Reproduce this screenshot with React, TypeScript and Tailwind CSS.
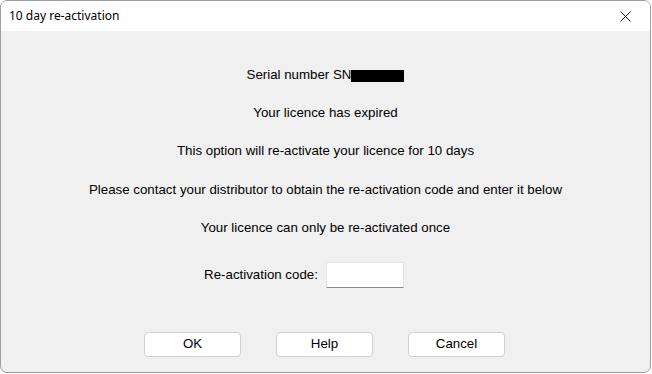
export default function App() {
  const lines = [
    "Your licence has expired",
    "This option will re-activate your licence for 10 days",
    "Please contact your distributor to obtain the re-activation code and enter it below",
    "Your licence can only be re-activated once",
  ];

  return (
    <div className="w-[652px] h-[374px] bg-white">
      <div className="w-[651px] h-[373px] border border-[#a0a0a0] rounded-[7px] overflow-hidden flex flex-col bg-[#f0f0f0]">
        {/* Title bar */}
        <div className="h-[30px] bg-white flex items-center justify-between pl-[8px] pr-[19px] shrink-0">
          <span className="text-[12px] text-black font-['Noto_Sans',sans-serif]">10 day re-activation</span>
          <svg width="11" height="11" viewBox="0 0 11 11" className="text-[#1a1a1a]">
            <path d="M0.5 0.5L10.5 10.5M10.5 0.5L0.5 10.5" stroke="currentColor" strokeWidth="1" />
          </svg>
        </div>

        {/* Body */}
        <div className="flex-1 flex flex-col items-center pt-[25px] text-[13.3px] text-black font-['Liberation_Sans',Arial,sans-serif]">
          <div className="h-[38px] leading-[38px] flex items-center">
            <span>Serial number SN</span>
            <span className="inline-block w-[53px] h-[12px] bg-black mt-[1px]" />
          </div>
          {lines.map((line) => (
            <div key={line} className="h-[38.4px] leading-[38.4px]">
              {line}
            </div>
          ))}

          <div className="mt-[14px] flex items-center gap-[8px] mr-[43px]">
            <span>Re-activation code:</span>
            <div className="w-[78px] h-[26px] bg-white border border-[#e3e3e3] border-b-[#8a8a8a]" />
          </div>

          <div className="mt-[44px] flex gap-[35px] mr-[2px]">
            {["OK", "Help", "Cancel"].map((label) => (
              <button
                key={label}
                className="w-[97px] h-[25px] bg-white border border-[#d0d0d0] rounded-[4px] text-[13.3px] text-black"
              >
                {label}
              </button>
            ))}
          </div>
        </div>
      </div>
    </div>
  );
}
